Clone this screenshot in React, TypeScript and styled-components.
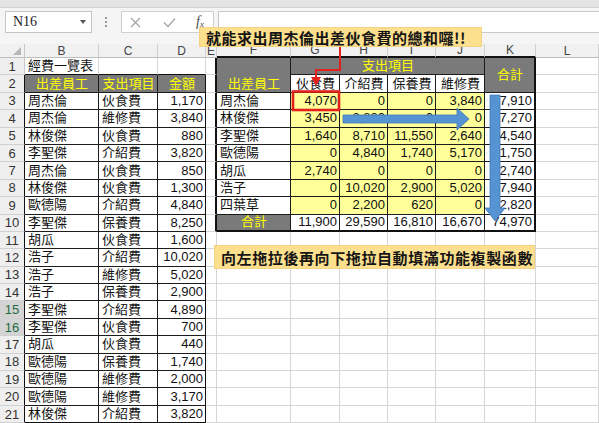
import React from "react";
import styled, { createGlobalStyle } from "styled-components";

const GlobalStyle = createGlobalStyle`
  html, body { margin: 0; padding: 0; background: #ffffff; }
  body {
    font-family: "Liberation Sans", "Noto Sans CJK TC", sans-serif;
    overflow: hidden;
  }
`;

/* ---------- layout constants ---------- */
const COL_WIDTHS = [25, 74, 59, 48, 11, 74, 49, 48, 48, 49, 51];
const COL_LETTERS = ["", "B", "C", "D", "E", "F", "G", "H", "I", "J", "K", "L"];
const ROWS = 21;
const GRID = "#d6d6d6";

type Align = "left" | "center" | "right";
type Variant = "plain" | "head" | "yellow";
interface CellSpec {
  r: number;
  c: number;
  rs?: number;
  cs?: number;
  text?: string;
  align?: Align;
  variant?: Variant;
  valign?: "center" | "flex-end";
}

const TABLES = [
  { r0: 2, r1: 21, c0: 1, c1: 3, thick: false },
  { r0: 1, r1: 10, c0: 5, c1: 10, thick: true },
];

const tableOf = (r: number, c: number) =>
  TABLES.findIndex((t) => r >= t.r0 && r <= t.r1 && c >= t.c0 && c <= t.c1);

function edge(a: [number, number], b: [number, number], fallback: string) {
  const ta = tableOf(a[0], a[1]);
  const tb = tableOf(b[0], b[1]);
  if (ta >= 0 && ta === tb) return "1px solid #1c1c1c";
  const t = ta >= 0 ? ta : tb;
  if (t >= 0) return `${TABLES[t].thick ? 2 : 1}px solid #111`;
  return `1px solid ${fallback}`;
}

/* ---------- data ---------- */
const leftData: [string, string, string][] = [
  ["周杰倫", "伙食費", "1,170"],
  ["周杰倫", "維修費", "3,840"],
  ["林俊傑", "伙食費", "880"],
  ["李聖傑", "介紹費", "3,820"],
  ["周杰倫", "伙食費", "850"],
  ["林俊傑", "伙食費", "1,300"],
  ["歐德陽", "介紹費", "4,840"],
  ["李聖傑", "保養費", "8,250"],
  ["胡瓜", "伙食費", "1,600"],
  ["浩子", "介紹費", "10,020"],
  ["浩子", "維修費", "5,020"],
  ["浩子", "保養費", "2,900"],
  ["李聖傑", "介紹費", "4,890"],
  ["李聖傑", "伙食費", "700"],
  ["胡瓜", "伙食費", "440"],
  ["歐德陽", "保養費", "1,740"],
  ["歐德陽", "維修費", "2,000"],
  ["歐德陽", "維修費", "3,170"],
  ["林俊傑", "介紹費", "3,820"],
];

const rightData: [string, string, string, string, string, string][] = [
  ["周杰倫", "4,070", "0", "0", "3,840", "7,910"],
  ["林俊傑", "3,450", "3,820", "0", "0", "7,270"],
  ["李聖傑", "1,640", "8,710", "11,550", "2,640", "24,540"],
  ["歐德陽", "0", "4,840", "1,740", "5,170", "11,750"],
  ["胡瓜", "2,740", "0", "0", "0", "2,740"],
  ["浩子", "0", "10,020", "2,900", "5,020", "17,940"],
  ["四葉草", "0", "2,200", "620", "0", "2,820"],
];

function buildCells(): CellSpec[] {
  const s: CellSpec[] = [];
  s.push({ r: 1, c: 1, text: "經費一覽表" });
  ["出差員工", "支出項目", "金額"].forEach((t, i) =>
    s.push({ r: 2, c: 1 + i, text: t, variant: "head", align: "center" })
  );
  leftData.forEach((row, i) => {
    s.push({ r: 3 + i, c: 1, text: row[0] });
    s.push({ r: 3 + i, c: 2, text: row[1] });
    s.push({ r: 3 + i, c: 3, text: row[2], align: "right" });
  });
  s.push({ r: 1, c: 5, rs: 2, text: "出差員工", variant: "head", align: "center", valign: "flex-end" });
  s.push({ r: 1, c: 6, cs: 4, text: "支出項目", variant: "head", align: "center" });
  s.push({ r: 1, c: 10, rs: 2, text: "合計", variant: "head", align: "center" });
  ["伙食費", "介紹費", "保養費", "維修費"].forEach((t, i) =>
    s.push({ r: 2, c: 6 + i, text: t, align: "center" })
  );
  rightData.forEach((row, i) => {
    s.push({ r: 3 + i, c: 5, text: row[0] });
    for (let k = 1; k <= 4; k++)
      s.push({ r: 3 + i, c: 5 + k, text: row[k], align: "right", variant: "yellow" });
    s.push({ r: 3 + i, c: 10, text: row[5], align: "right" });
  });
  s.push({ r: 10, c: 5, text: "合計", variant: "head", align: "center" });
  ["11,900", "29,590", "16,810", "16,670", "74,970"].forEach((t, i) =>
    s.push({ r: 10, c: 6 + i, text: t, align: "right" })
  );

  const covered = new Set<string>();
  s.forEach((x) => {
    for (let dr = 0; dr < (x.rs ?? 1); dr++)
      for (let dc = 0; dc < (x.cs ?? 1); dc++) covered.add(`${x.r + dr}-${x.c + dc}`);
  });
  for (let r = 1; r <= ROWS; r++)
    for (let c = 1; c <= 11; c++) if (!covered.has(`${r}-${c}`)) s.push({ r, c });
  return s;
}

const CELLS = buildCells();

/* ---------- styled parts ---------- */
const Page = styled.div`
  position: relative;
  width: 599px;
  height: 423px;
  overflow: hidden;
  background: #fff;
`;

const TopStrip = styled.div`
  height: 7px;
  background: #e4e4e4;
  border-bottom: 1px solid #d2d2d2;
`;

const FormulaBar = styled.div`
  height: 36px;
  box-sizing: border-box;
  background: #f5f5f5;
  display: flex;
  align-items: flex-start;
  padding: 3px 0 0 5px;
`;

const NameBox = styled.div`
  width: 87px;
  height: 22px;
  box-sizing: border-box;
  border: 1px solid #c4c4c4;
  background: #fff;
  display: flex;
  align-items: center;
  justify-content: space-between;
  padding: 0 5px 0 7px;
  font-family: "Liberation Serif", "DejaVu Serif", serif;
  font-size: 14px;
  color: #222;
`;

const Caret = styled.span`
  width: 0;
  height: 0;
  border-left: 3.5px solid transparent;
  border-right: 3.5px solid transparent;
  border-top: 4px solid #555;
`;

const Dots = styled.div`
  margin: 6px 0 0 12px;
  width: 4px;
  display: flex;
  flex-direction: column;
  align-items: center;
  gap: 2px;
  span {
    width: 2px;
    height: 2px;
    background: #9a9a9a;
  }
`;

const FuncBox = styled.div`
  margin-left: 13px;
  width: 93px;
  height: 22px;
  box-sizing: border-box;
  border: 1px solid #d0d0d0;
  background: #fff;
  display: flex;
  align-items: center;
  padding-left: 8px;
  gap: 22px;
`;

const Fx = styled.span`
  margin-left: -2px;
  font-family: "Liberation Serif", serif;
  font-style: italic;
  font-size: 14px;
  color: #4a4a4a;
  sub {
    font-size: 9px;
    vertical-align: -1px;
  }
`;

const FormulaInput = styled.div`
  margin-left: 4px;
  flex: 1;
  height: 22px;
  box-sizing: border-box;
  border: 1px solid #c8c8c8;
  border-right: none;
  background: #fff;
`;

const Sheet = styled.div`
  display: grid;
  grid-template-columns: ${COL_WIDTHS.map((w) => `${w}px`).join(" ")} 1fr;
  grid-template-rows: 14px repeat(${ROWS}, 17.4px);
  background: #fff;
`;

const Corner = styled.div`
  grid-column: 1;
  grid-row: 1;
  position: relative;
  background: #f1f1f1;
  border-right: 1px solid #c8c8c8;
  border-bottom: 1px solid #bdbdbd;
  &::after {
    content: "";
    position: absolute;
    right: 3px;
    bottom: 2px;
    border-left: 8px solid transparent;
    border-bottom: 8px solid #b6b6b6;
  }
`;

const ColHeader = styled.div<{ $col: number; $bb: string }>`
  grid-column: ${(p) => p.$col + 1};
  grid-row: 1;
  background: #f1f1f1;
  border-right: 1px solid #cfcfcf;
  border-bottom: ${(p) => p.$bb};
  display: flex;
  align-items: center;
  justify-content: center;
  font-size: 12px;
  color: #444;
  overflow: hidden;
`;

const RowHeader = styled.div<{ $row: number; $active: boolean; $rb: string }>`
  grid-column: 1;
  grid-row: ${(p) => p.$row + 1};
  background: ${(p) => (p.$active ? "#d4d4d4" : "#efefef")};
  color: ${(p) => (p.$active ? "#1f6b43" : "#333")};
  border-right: ${(p) => p.$rb};
  border-bottom: 1px solid #d0d0d0;
  display: flex;
  align-items: center;
  justify-content: center;
  font-size: 13px;
`;

const BG: Record<Variant, string> = { plain: "transparent", head: "#7a7a7a", yellow: "#ffff99" };
const FG: Record<Variant, string> = { plain: "#111", head: "#ffff00", yellow: "#111" };
const JUSTIFY: Record<Align, string> = { left: "flex-start", center: "center", right: "flex-end" };

const SheetCell = styled.div<{
  $r: number;
  $c: number;
  $rs: number;
  $cs: number;
  $variant: Variant;
  $align: Align;
  $valign: string;
  $rb: string;
  $bb: string;
}>`
  grid-column: ${(p) => p.$c + 1} / span ${(p) => p.$cs};
  grid-row: ${(p) => p.$r + 1} / span ${(p) => p.$rs};
  background: ${(p) => BG[p.$variant]};
  color: ${(p) => FG[p.$variant]};
  border-right: ${(p) => p.$rb};
  border-bottom: ${(p) => p.$bb};
  display: flex;
  align-items: ${(p) => p.$valign};
  justify-content: ${(p) => JUSTIFY[p.$align]};
  padding: 0 2px 0 3px;
  font-size: 13px;
  line-height: 16px;
  white-space: nowrap;
  overflow: hidden;
  min-width: 0;
`;

const Overlay = styled.svg`
  position: absolute;
  left: 0;
  top: 0;
  pointer-events: none;
`;

const Callout = styled.div<{ $left: number; $top: number; $w: number; $h: number; $ls: number }>`
  position: absolute;
  left: ${(p) => p.$left}px;
  top: ${(p) => p.$top}px;
  width: ${(p) => p.$w}px;
  height: ${(p) => p.$h}px;
  box-sizing: border-box;
  padding-left: 7px;
  display: flex;
  align-items: center;
  background: #fde08e;
  box-shadow: inset 0 0 0 1px #f6d383;
  font-family: "Noto Sans CJK TC", sans-serif;
  font-weight: 700;
  font-size: 15px;
  letter-spacing: ${(p) => p.$ls}px;
  color: #151515;
  white-space: nowrap;
`;

/* ---------- component ---------- */
export default function App() {
  return (
    <>
      <GlobalStyle />
      <Page>
        <TopStrip />
        <FormulaBar>
          <NameBox>
            N16
            <Caret />
          </NameBox>
          <Dots>
            <span />
            <span />
            <span />
          </Dots>
          <FuncBox>
            <svg width="11" height="11" viewBox="0 0 11 11">
              <path d="M1 1 L10 10 M10 1 L1 10" stroke="#a6a6a6" strokeWidth="1.3" />
            </svg>
            <svg width="13" height="11" viewBox="0 0 13 11">
              <path d="M1 5.5 L5 9.5 L12 1.5" stroke="#a6a6a6" strokeWidth="1.3" fill="none" />
            </svg>
            <Fx>
              f<sub>x</sub>
            </Fx>
          </FuncBox>
          <FormulaInput />
        </FormulaBar>

        <Sheet>
          <Corner />
          {COL_LETTERS.slice(1).map((l, i) => (
            <ColHeader key={l} $col={i + 1} $bb={edge([0, i + 1], [1, i + 1], "#bdbdbd")}>
              {l}
            </ColHeader>
          ))}
          {Array.from({ length: ROWS }, (_, i) => i + 1).map((r) => (
            <RowHeader key={r} $row={r} $active={r === 15 || r === 16} $rb={edge([r, 0], [r, 1], "#c8c8c8")}>
              {r}
            </RowHeader>
          ))}
          {CELLS.map((x) => {
            const rs = x.rs ?? 1;
            const cs = x.cs ?? 1;
            const lastR = x.r + rs - 1;
            const lastC = x.c + cs - 1;
            return (
              <SheetCell
                key={`${x.r}-${x.c}`}
                $r={x.r}
                $c={x.c}
                $rs={rs}
                $cs={cs}
                $variant={x.variant ?? "plain"}
                $align={x.align ?? "left"}
                $valign={x.valign ?? "center"}
                $rb={edge([x.r, lastC], [x.r, lastC + 1], GRID)}
                $bb={edge([lastR, x.c], [lastR + 1, x.c], GRID)}
              >
                {x.text}
              </SheetCell>
            );
          })}
        </Sheet>

        <Overlay width="599" height="423" viewBox="0 0 599 423">
          <path d="M340 46 V70 H316 V78" stroke="#e3211c" strokeWidth="2" fill="none" />
          <polygon points="311,77 321,77 316,86" fill="#e3211c" />
          <rect x="293" y="91.5" width="46" height="18.5" stroke="#e3211c" strokeWidth="2.6" fill="none" />
          <polygon
            points="343,115 457,115 457,108 469,119 457,130 457,123 343,123"
            fill="#5693d3"
            stroke="#3f78b6"
            strokeWidth="0.8"
          />
          <polygon
            points="490,95 500,95 500,208 505,208 495,221 485,208 490,208"
            fill="#5693d3"
            stroke="#3f78b6"
            strokeWidth="0.8"
          />
        </Overlay>

        <Callout $left={199} $top={27} $w={283} $h={20} $ls={0.5}>
          就能求出周杰倫出差伙食費的總和囉!!
        </Callout>
        <Callout $left={214} $top={245} $w={321} $h={24} $ls={0.6}>
          向左拖拉後再向下拖拉自動填滿功能複製函數
        </Callout>
      </Page>
    </>
  );
}
